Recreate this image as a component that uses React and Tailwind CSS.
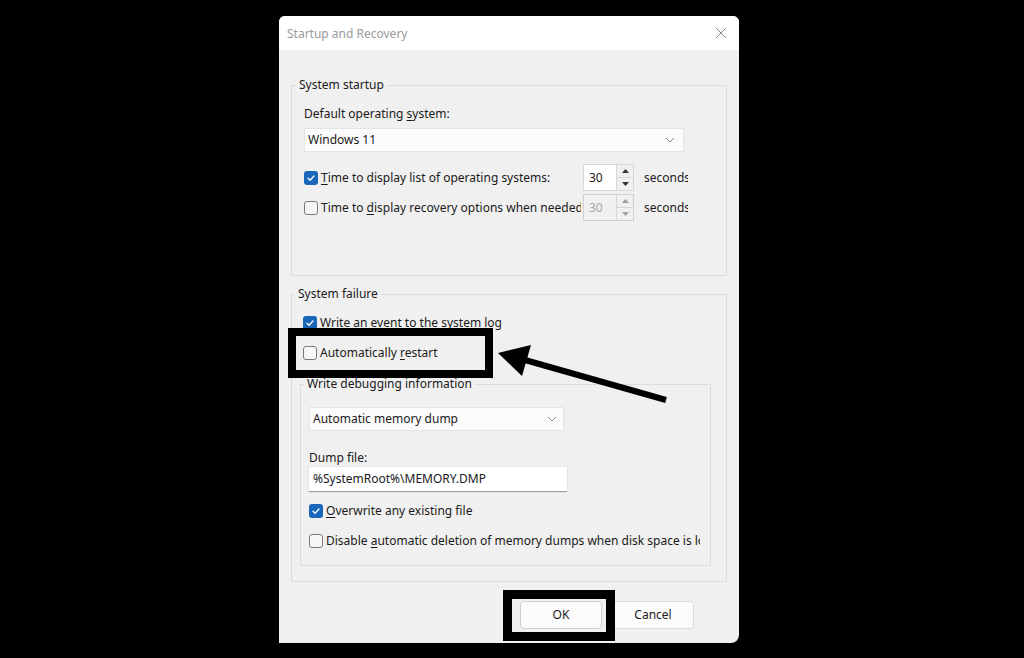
import React from "react";

const font = { fontFamily: '"Noto Sans", "Open Sans", sans-serif' };

function U({ children }) {
  return <span className="underline underline-offset-2 decoration-1">{children}</span>;
}

function Check({ checked }) {
  if (checked) {
    return (
      <span className="flex h-[14px] w-[14px] shrink-0 items-center justify-center rounded-[3px] bg-[#1a66b8]">
        <svg width="10" height="10" viewBox="0 0 10 10">
          <path d="M2 5.2 L4.1 7.2 L8 3" fill="none" stroke="white" strokeWidth="1.3" strokeLinecap="round" strokeLinejoin="round" />
        </svg>
      </span>
    );
  }
  return <span className="h-[14px] w-[14px] shrink-0 rounded-[3px] border border-[#7a7a7a] bg-[#f7f7f7]" />;
}

function Row({ checked, children, className = "" }) {
  return (
    <div className={"flex h-[20px] items-center gap-[3px] " + className}>
      <Check checked={checked} />
      <span className="whitespace-nowrap">{children}</span>
    </div>
  );
}

function Chevron() {
  return (
    <svg width="10" height="6" viewBox="0 0 10 6">
      <path d="M1 1 L5 5 L9 1" fill="none" stroke="#8a8a8a" strokeWidth="1" />
    </svg>
  );
}

function Spin({ disabled }) {
  return (
    <div className={"flex h-[27px] w-[51px] shrink-0 border " + (disabled ? "border-[#d0d0d0] bg-[#f0f0f0]" : "border-[#d6d6d6] bg-white")}>
      <div className={"flex flex-1 items-center pl-[5px] " + (disabled ? "text-[#a8a8a8]" : "text-[#1a1a1a]")}>30</div>
      <div className="flex w-[17px] flex-col border-l border-[#d6d6d6] bg-[#f0f0f0]">
        <div className="flex flex-1 items-center justify-center border-b border-[#d6d6d6]">
          <svg width="7" height="4" viewBox="0 0 7 4"><path d="M0 4 L3.5 0 L7 4Z" fill={disabled ? "#a0a0a0" : "#333"} /></svg>
        </div>
        <div className="flex flex-1 items-center justify-center">
          <svg width="7" height="4" viewBox="0 0 7 4"><path d="M0 0 L3.5 4 L7 0Z" fill={disabled ? "#a0a0a0" : "#333"} /></svg>
        </div>
      </div>
    </div>
  );
}

export default function App() {
  return (
    <div className="relative h-[658px] w-[1024px] overflow-hidden bg-black text-[12px] text-[#1a1a1a]" style={font}>
      <div className="ml-[279px] mt-[16px] flex h-[627px] w-[460px] flex-col overflow-hidden rounded-t-[6px] rounded-br-[8px] bg-[#f0f0f0]">
        {/* Title bar */}
        <div className="flex h-[34px] shrink-0 items-center justify-between bg-white pl-[8px] pr-[12px]">
          <span className="pt-[1px] text-[12px] text-[#9a9a9a]">Startup and Recovery</span>
          <svg width="12" height="12" viewBox="0 0 12 12">
            <path d="M1 1 L11 11 M11 1 L1 11" stroke="#8a8a8a" strokeWidth="1" />
          </svg>
        </div>

        <div className="flex flex-1 flex-col px-[12px] pt-[26px]">
          {/* System startup */}
          <fieldset className="h-[200px] min-w-0 border border-[#dcdcdc] px-[12px]">
            <legend className="-ml-[8px] px-[3px] leading-[18px]">System startup</legend>
            <div className="mt-[11px] leading-[18px]">Default operating <U>s</U>ystem:</div>
            <div className="mt-[5px] flex h-[24px] w-[380px] items-center justify-between border border-[#e4e4e4] bg-[#fbfbfb] pl-[3px] pr-[8px]">
              <span>Windows 11</span>
              <Chevron />
            </div>
            <div className="mt-[12px] flex h-[27px] items-center">
              <Row checked className="w-[279px] shrink-0">
                <U>T</U>ime to display list of operating systems:
              </Row>
              <Spin />
              <span className="ml-[10px] w-[44px] overflow-hidden whitespace-nowrap">seconds</span>
            </div>
            <div className="mt-[3px] flex h-[27px] items-center">
              <div className="mr-[2px] w-[277px] shrink-0 overflow-hidden">
                <Row>
                  Time to <U>d</U>isplay recovery options when needed:
                </Row>
              </div>
              <Spin disabled />
              <span className="ml-[10px] w-[44px] overflow-hidden whitespace-nowrap">seconds</span>
            </div>
          </fieldset>

          {/* System failure */}
          <fieldset className="mt-[9px] h-[297px] min-w-0 border border-[#dcdcdc] pl-[8px] pr-[15px]">
            <legend className="-ml-[5px] px-[3px] leading-[18px]">System failure</legend>
            <Row checked className="ml-[3px] mt-[10px]">Write an event to the system log</Row>
            <Row className="ml-[3px] mt-[10px]">
              Automatically <U>r</U>estart
            </Row>
            <fieldset className="mt-[12px] h-[191px] min-w-0 border border-[#dcdcdc] pl-[8px] pr-[10px]">
              <legend className="-ml-[5px] px-[3px] leading-[18px]">Write debugging information</legend>
              <div className="mt-[14px] flex h-[24px] w-[255px] items-center justify-between border border-[#e4e4e4] bg-[#fbfbfb] pl-[3px] pr-[6px]">
                <span>Automatic memory dump</span>
                <Chevron />
              </div>
              <div className="mt-[18px] leading-[18px]">Dump file:</div>
              <div className="flex h-[25px] w-[258px] items-center border-b border-[#9a9a9a] bg-white pl-[4px] shadow-[0_0_0_1px_#e6e6e6]">
                %SystemRoot%\MEMORY.DMP
              </div>
              <Row checked className="mt-[9px]">
                <U>O</U>verwrite any existing file
              </Row>
              <div className="mt-[10px] overflow-hidden">
                <Row>
                  Disable <U>a</U>utomatic deletion of memory dumps when disk space is low
                </Row>
              </div>
            </fieldset>
          </fieldset>

          {/* Buttons */}
          <div className="mt-[19px] flex justify-end gap-[10px] pr-[33px]">
            <button className="h-[28px] w-[82px] rounded-[4px] border border-[#d0d0d0] bg-[#fbfbfb] text-[#1a1a1a]">OK</button>
            <button className="h-[28px] w-[82px] rounded-[4px] border border-[#dcdcdc] bg-[#fbfbfb] text-[#1a1a1a]">Cancel</button>
          </div>
        </div>
      </div>

      {/* Annotation overlay */}
      <svg className="pointer-events-none absolute inset-0" width="1024" height="658" viewBox="0 0 1024 658">
        <rect x="292" y="332" width="197" height="42" fill="none" stroke="black" strokeWidth="8" />
        <rect x="507.5" y="594.5" width="103" height="42" fill="none" stroke="black" strokeWidth="9" />
        <line x1="666" y1="400" x2="525" y2="360" stroke="black" strokeWidth="6" />
        <path d="M498 353 L531 345 L522 376 Z" fill="black" />
      </svg>
    </div>
  );
}
